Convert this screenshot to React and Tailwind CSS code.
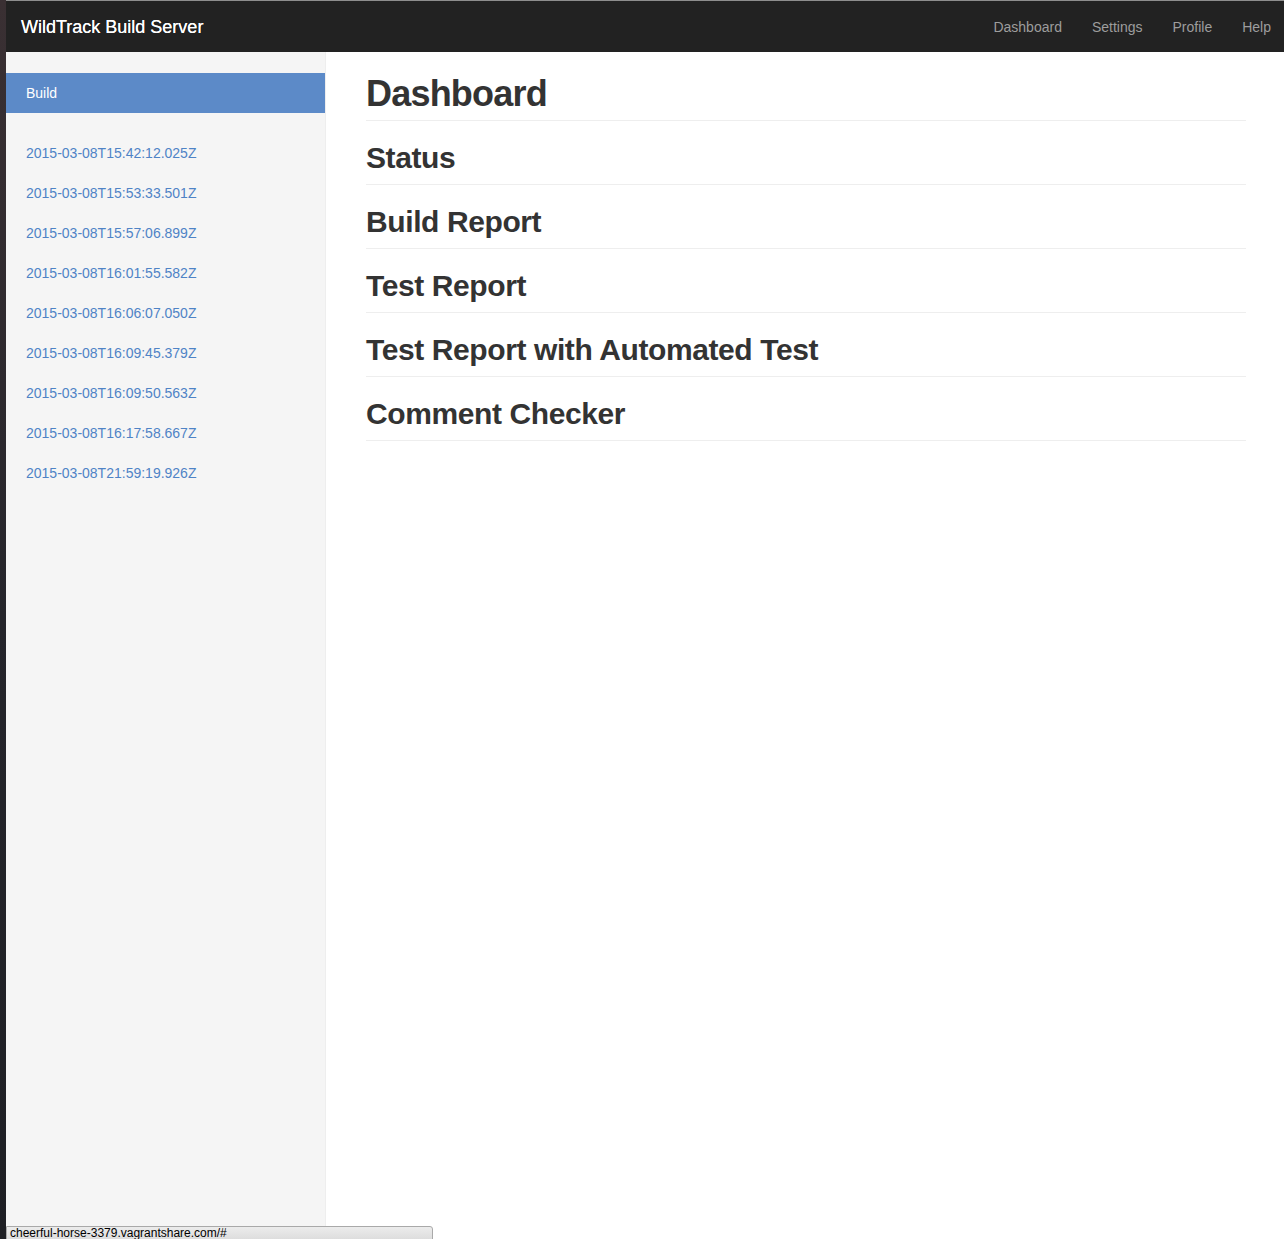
import React from "react";

const builds = [
  "2015-03-08T15:42:12.025Z",
  "2015-03-08T15:53:33.501Z",
  "2015-03-08T15:57:06.899Z",
  "2015-03-08T16:01:55.582Z",
  "2015-03-08T16:06:07.050Z",
  "2015-03-08T16:09:45.379Z",
  "2015-03-08T16:09:50.563Z",
  "2015-03-08T16:17:58.667Z",
  "2015-03-08T21:59:19.926Z",
];

const sections = [
  "Status",
  "Build Report",
  "Test Report",
  "Test Report with Automated Test",
  "Comment Checker",
];

const navLinks = ["Dashboard", "Settings", "Profile", "Help"];

const App = () => {
  return (
    <div
      className="relative flex h-[1239px] w-full overflow-hidden bg-white text-[#333]"
      style={{ fontFamily: '"Liberation Sans", Arial, sans-serif' }}
    >
      {/* desktop edge */}
      <div className="w-[6px] shrink-0 bg-gradient-to-b from-[#3a3033] via-[#25252b] to-[#1e1f24]" />

      <div className="flex min-w-0 flex-1 flex-col">
        {/* Navbar */}
        <div className="h-px bg-[#8e8e8e]" />
        <nav className="flex h-[51px] shrink-0 items-center justify-between bg-[#222] pl-[15px] pt-[2px]">
          <a className="text-[18px] text-white [text-shadow:0_0_0.4px_#fff]">WildTrack Build Server</a>
          <ul className="mr-[-2px] flex">
            {navLinks.map((link) => (
              <li key={link}>
                <a className="block px-[15px] text-[14px] text-[#9d9d9d]">{link}</a>
              </li>
            ))}
          </ul>
        </nav>

        <div className="flex flex-1">
          {/* Sidebar */}
          <aside className="w-[320px] shrink-0 border-r border-[#eee] bg-[#f5f5f5] pt-[21px]">
            <ul className="mb-[20px]">
              <li className="h-[40px] bg-[#5c8ac8] px-[20px] text-[14px] leading-[40px] text-white">
                Build
              </li>
            </ul>
            <ul>
              {builds.map((b) => (
                <li key={b}>
                  <a className="block h-[40px] px-[20px] text-[14px] leading-[40px] text-[#4f83c6]">
                    {b}
                  </a>
                </li>
              ))}
            </ul>
          </aside>

          {/* Main */}
          <main className="flex-1 pl-[40px] pr-[38px] pt-[22px]">
            <h1 className="border-b border-[#eee] pb-[6px] text-[36px] font-semibold leading-[40px] tracking-[-0.8px]">
              Dashboard
            </h1>
            {sections.map((s) => (
              <h2
                key={s}
                className="border-b border-[#eee] pb-[10px] pt-[20px] text-[30px] font-semibold leading-[33px] tracking-[-0.4px]"
              >
                {s}
              </h2>
            ))}
          </main>
        </div>
      </div>

      {/* browser status bubble */}
      <div className="absolute bottom-[-2px] left-[6px] h-[15px] w-[427px] rounded-tr-[3px] border border-[#a9a9a9] bg-gradient-to-b from-[#ececec] to-[#dcdcdc] pl-[3px] text-[12px] leading-[13px] text-black">
        cheerful-horse-3379.vagrantshare.com/#
      </div>
    </div>
  );
};

export default App;
